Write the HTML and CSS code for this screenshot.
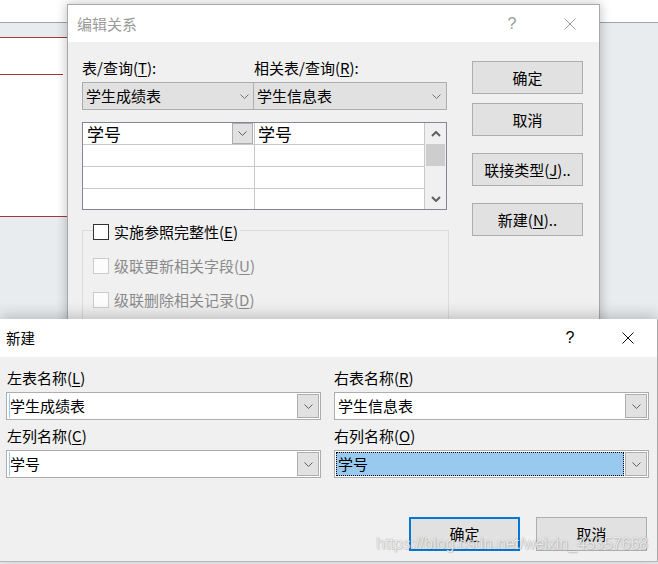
FILE: index.html
```html
<!DOCTYPE html>
<html lang="zh-CN">
<head>
<meta charset="utf-8">
<title>编辑关系 - 新建</title>
<link rel="stylesheet" href="styles.css">
</head>
<body>
<div class="desk">
  <div class="desk-top"></div>
  <div class="desk-table"><div class="desk-line"></div></div>

  <section class="dlg dlg-rel">
    <div class="titlebar inactive">
      <span class="title">编辑关系</span>
      <div class="caps">
        <span class="cap">?</span>
        <span class="cap"><svg width="12" height="12" viewBox="0 0 12 12"><path d="M0.5 0.5L11.5 11.5M11.5 0.5L0.5 11.5" stroke="#9a9a9a" stroke-width="1" fill="none"/></svg></span>
      </div>
    </div>
    <div class="rel-body">
      <div class="rel-main">
        <div class="rel-labels"><span>表/查询(<u>T</u>):</span><span>相关表/查询(<u>R</u>):</span></div>
        <div class="rel-combos">
          <div class="rc rc-left"><span class="rc-text">学生成绩表</span><svg class="chev" width="9" height="5" viewBox="0 0 9 5"><polyline points="0.5,0.5 4.5,4.5 8.5,0.5" stroke="#707070" fill="none"/></svg></div>
          <div class="rc rc-right"><span class="rc-text">学生信息表</span><svg class="chev" width="9" height="5" viewBox="0 0 9 5"><polyline points="0.5,0.5 4.5,4.5 8.5,0.5" stroke="#707070" fill="none"/></svg></div>
        </div>
        <div class="rel-grid">
          <div class="rg-cols">
            <div class="rg-row">
              <div class="rg-cell c1"><span class="rg-text">学号</span><span class="rg-dd"><svg width="9" height="5" viewBox="0 0 9 5"><polyline points="0.5,0.5 4.5,4.5 8.5,0.5" stroke="#606060" fill="none"/></svg></span></div>
              <div class="rg-cell c2"><span class="rg-text">学号</span></div>
            </div>
            <div class="rg-row"><div class="rg-cell c1"></div><div class="rg-cell c2"></div></div>
            <div class="rg-row"><div class="rg-cell c1"></div><div class="rg-cell c2"></div></div>
            <div class="rg-row last"><div class="rg-cell c1"></div><div class="rg-cell c2"></div></div>
          </div>
          <div class="rg-scroll">
            <div class="sb-btn"><svg width="10" height="6" viewBox="0 0 10 6"><polyline points="1,5 5,1 9,5" stroke="#606060" stroke-width="2" fill="none"/></svg></div>
            <div class="sb-thumb"></div>
            <div class="sb-space"></div>
            <div class="sb-btn"><svg width="10" height="6" viewBox="0 0 10 6"><polyline points="1,1 5,5 9,1" stroke="#606060" stroke-width="2" fill="none"/></svg></div>
          </div>
        </div>
        <div class="rel-group">
          <div class="chk legend"><span class="box"></span><span>实施参照完整性(<u>E</u>)</span></div>
          <div class="chk dis"><span class="box"></span><span>级联更新相关字段(<u>U</u>)</span></div>
          <div class="chk dis"><span class="box"></span><span>级联删除相关记录(<u>D</u>)</span></div>
        </div>
      </div>
      <div class="rel-buttons">
        <div class="btn">确定</div>
        <div class="btn b2">取消</div>
        <div class="btn b3">联接类型(<u>J</u>)..</div>
        <div class="btn b3">新建(<u>N</u>)..</div>
      </div>
    </div>
  </section>

  <section class="dlg dlg-new">
    <div class="titlebar">
      <span class="title">新建</span>
      <div class="caps">
        <span class="cap">?</span>
        <span class="cap"><svg width="12" height="12" viewBox="0 0 12 12"><path d="M0.5 0.5L11.5 11.5M11.5 0.5L0.5 11.5" stroke="#111" stroke-width="1" fill="none"/></svg></span>
      </div>
    </div>
    <div class="new-body">
      <div class="new-grid">
        <div class="field">
          <div class="flabel">左表名称(<u>L</u>)</div>
          <div class="combo"><span class="ctext caret">学生成绩表</span><span class="cdd"><svg width="9" height="5" viewBox="0 0 9 5"><polyline points="0.5,0.5 4.5,4.5 8.5,0.5" stroke="#606060" fill="none"/></svg></span></div>
        </div>
        <div class="field">
          <div class="flabel r">右表名称(<u>R</u>)</div>
          <div class="combo"><span class="ctext">学生信息表</span><span class="cdd"><svg width="9" height="5" viewBox="0 0 9 5"><polyline points="0.5,0.5 4.5,4.5 8.5,0.5" stroke="#606060" fill="none"/></svg></span></div>
        </div>
        <div class="field f2">
          <div class="flabel">左列名称(<u>C</u>)</div>
          <div class="combo"><span class="ctext caret">学号</span><span class="cdd"><svg width="9" height="5" viewBox="0 0 9 5"><polyline points="0.5,0.5 4.5,4.5 8.5,0.5" stroke="#606060" fill="none"/></svg></span></div>
        </div>
        <div class="field f2">
          <div class="flabel r">右列名称(<u>O</u>)</div>
          <div class="combo"><span class="ctext sel">学号</span><span class="cdd"><svg width="9" height="5" viewBox="0 0 9 5"><polyline points="0.5,0.5 4.5,4.5 8.5,0.5" stroke="#606060" fill="none"/></svg></span></div>
        </div>
      </div>
      <div class="new-buttons">
        <div class="btn nb default">确定</div>
        <div class="btn nb">取消</div>
      </div>
    </div>
  </section>

  <div class="watermark">https://blog.csdn.net/weixin_45357668</div>
</div>
</body>
</html>
```

FILE: styles.css
```css
* { box-sizing: border-box; }
body {
  margin: 0;
  font-family: "Noto Sans CJK SC", "Noto Sans", sans-serif;
  color: #000;
}
u { text-decoration: underline; text-underline-offset: 2px; }

.desk {
  position: relative;
  width: 658px;
  height: 564px;
  overflow: hidden;
  background: #e9ecef;
}
.desk-top {
  height: 23px;
  background: #fff;
  border-bottom: 1px solid #9fa3a7;
}
.desk-table {
  margin-top: 14px;
  width: 68px;
  height: 180px;
  background: #fff;
  border-top: 1px solid #a4373a;
  border-bottom: 1px solid #a4373a;
  border-right: 1px solid #a4373a;
  padding-top: 36px;
}
.desk-line {
  width: 63px;
  height: 1px;
  background: #a4373a;
}

/* dialogs */
.dlg {
  position: absolute;
  background: #f0f0f0;
}
.dlg-rel {
  left: 67px;
  top: 4px;
  width: 533px;
  height: 345px;
  border: 1px solid #a8a8a8;
  box-shadow: 0 0 10px 1px rgba(0, 0, 0, 0.22);
}
.dlg-new {
  left: 0;
  top: 319px;
  width: 658px;
  height: 243px;
  border-right: 1px solid #a8a8a8;
  border-bottom: 1px solid #b8b8b8;
  box-shadow: 0 -3px 14px rgba(0, 0, 0, 0.22);
}

.titlebar {
  height: 37px;
  background: #fff;
  display: flex;
  align-items: center;
  padding-left: 9px;
  font-size: 15px;
  line-height: 20px;
}
.dlg-new .titlebar {
  height: 38px;
  padding-left: 6px;
  font-size: 14.5px;
}
.titlebar.inactive { color: #9a9a9a; }
.caps {
  margin-left: auto;
  display: flex;
  align-items: center;
}
.cap {
  width: 58px;
  height: 30px;
  display: flex;
  align-items: center;
  justify-content: center;
  font-family: "Liberation Sans", sans-serif;
  font-size: 16px;
}

/* edit relationship body */
.rel-body {
  display: flex;
  padding: 16px 0 0 14px;
  gap: 23px;
  font-size: 15px;
}
.rel-main { width: 367px; }
.rel-labels {
  display: grid;
  grid-template-columns: 172px 193px;
  height: 20px;
  line-height: 20px;
}
.rel-combos {
  margin-top: 4px;
  width: 365px;
  height: 28px;
  display: flex;
  background: #e1e1e1;
  border: 1px solid #adadad;
}
.rc {
  display: flex;
  align-items: center;
  height: 100%;
  line-height: 20px;
  padding-left: 3px;
}
.rc-left { width: 171px; border-right: 1px solid #adadad; padding-right: 4px; }
.rc-right { flex: 1; padding-right: 5px; }
.rc-text { flex: 1; }
.chev { display: block; }

.rel-grid {
  margin-top: 12px;
  width: 365px;
  height: 88px;
  border: 1px solid #828790;
  background: #fff;
  display: flex;
}
.rg-cols { flex: 1; }
.rg-row {
  display: flex;
  height: 22px;
  border-bottom: 1px solid #c8c8c8;
}
.rg-row.last { height: 20px; border-bottom: none; }
.rg-cell { height: 100%; display: flex; align-items: center; }
.rg-cell.c1 { width: 172px; border-right: 1px solid #c8c8c8; padding-left: 4px; }
.rg-cell.c2 { flex: 1; padding-left: 3px; }
.rg-text { font-size: 17px; line-height: 21px; flex: 1; }
.rg-dd {
  width: 21px;
  height: 21px;
  margin-right: 1px;
  background: #e1e1e1;
  border: 1px solid #adadad;
  display: flex;
  align-items: center;
  justify-content: center;
}
.rg-scroll {
  width: 22px;
  border-left: 1px solid #c8c8c8;
  background: #f0f0f0;
  display: flex;
  flex-direction: column;
}
.sb-btn {
  height: 21px;
  display: flex;
  align-items: center;
  justify-content: center;
}
.sb-thumb {
  height: 22px;
  width: 19px;
  margin-left: 1px;
  background: #cdcdcd;
}
.sb-space { flex: 1; }

.rel-group {
  margin-top: 20px;
  width: 367px;
  height: 120px;
  border: 1px solid #dcdcdc;
  padding-left: 10px;
  display: flex;
  flex-direction: column;
  align-items: flex-start;
  gap: 14px;
}
.chk {
  display: flex;
  align-items: center;
  height: 20px;
  line-height: 20px;
  gap: 5px;
  background: #f0f0f0;
  padding-right: 2px;
}
.chk.legend { margin-top: -9px; }
.box {
  width: 16px;
  height: 16px;
  border: 1px solid #333;
  background: #fff;
}
.chk.dis { color: #8a8a8a; }
.chk.dis .box { border-color: #cccccc; background: #fcfcfc; }

.rel-buttons {
  display: flex;
  flex-direction: column;
  padding-top: 3px;
}
.btn {
  width: 111px;
  height: 33px;
  background: #e1e1e1;
  border: 1px solid #adadad;
  display: flex;
  align-items: center;
  justify-content: center;
  line-height: 20px;
  font-size: 15px;
}
.btn.b2 { margin-top: 9px; }
.btn.b3 { margin-top: 17px; }

/* new dialog body */
.new-body {
  padding: 11px 0 0 6px;
  font-size: 15px;
}
.new-grid {
  display: grid;
  grid-template-columns: 315px 315px;
  column-gap: 13px;
}
.field.f2 .flabel { margin-top: 6px; }
.flabel {
  height: 20px;
  line-height: 20px;
  padding-left: 1px;
  margin-bottom: 4px;
}
.flabel.r { padding-left: 0; }
.combo {
  height: 28px;
  border: 1px solid #adadad;
  background: #fff;
  display: flex;
  align-items: center;
  padding: 1px;
}
.ctext {
  flex: 1;
  height: 100%;
  display: flex;
  align-items: center;
  padding-left: 2px;
  line-height: 20px;
}
.ctext.caret {
  margin-left: 1px;
  border-left: 1px solid #99c9ef;
  padding-left: 0;
}
.ctext.sel {
  background: #99c9ef;
  outline: 1px dotted #000;
  outline-offset: -1px;
  margin-right: 1px;
}
.cdd {
  width: 22px;
  height: 24px;
  margin-right: 0;
  background: #e1e1e1;
  border: 1px solid #adadad;
  display: flex;
  align-items: center;
  justify-content: center;
}
.new-buttons {
  display: flex;
  justify-content: flex-end;
  gap: 16px;
  margin-top: 39px;
  padding-right: 10px;
}
.btn.nb { height: 34px; }
.btn.default { border: 2px solid #0078d7; }

.watermark {
  position: absolute;
  left: 376px;
  top: 535px;
  font-family: "Liberation Sans", sans-serif;
  font-size: 16px;
  line-height: 18px;
  color: rgba(255, 255, 255, 0.8);
  text-shadow: 0 0 1px rgba(0, 0, 0, 0.35), 1px 1px 1px rgba(0, 0, 0, 0.12);
  white-space: nowrap;
}
```
